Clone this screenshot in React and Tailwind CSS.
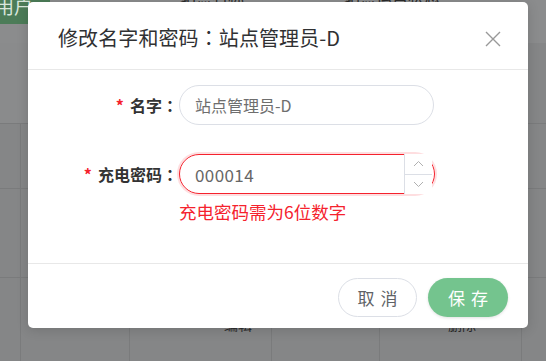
import { useState } from "react";

const font = { fontFamily: '"Noto Sans CJK SC", "Noto Sans", sans-serif' };

function Colon() {
  return <span className="font-['Noto_Sans_CJK_TC']">：</span>;
}

function CloseIcon() {
  return (
    <svg width="16" height="16" viewBox="0 0 16 16" fill="none" stroke="#999" strokeWidth="1.4">
      <path d="M1 1 L15 15 M15 1 L1 15" />
    </svg>
  );
}

function Chevron({ up }) {
  return (
    <svg width="11" height="7" viewBox="0 0 11 7" fill="none" stroke="#b0b0b0" strokeWidth="1">
      {up ? <path d="M1 6 L5.5 1.5 L10 6" /> : <path d="M1 1 L5.5 5.5 L10 1" />}
    </svg>
  );
}

function Background() {
  const cols = "grid grid-cols-[21px_109px_142px_108px_142px_24px]";
  return (
    <div className="absolute inset-0 flex flex-col bg-[#858687]">
      <div className="flex h-[24px] bg-[#8b8c8d]">
        <div className="w-[55px] bg-[#4c7c58] text-[#d9e6dc] text-[19px] leading-[19px] -mt-[4px] -ml-[5px] overflow-hidden">
          用户
        </div>
        <div className="flex-1 flex gap-[100px] pl-[130px] text-[16px] leading-[16px] -mt-[12px] text-[#2a2a2a]">
          <span>站点名称</span>
          <span>站点运营状态</span>
        </div>
      </div>
      <div className="h-[19px] bg-[#8b8c8d]" />
      <div className="h-[80px] flex">
        <div className="flex-1 bg-[#8a8b8c]" />
        <div className="w-[18px] bg-[#858687]" />
      </div>
      <div className={`${cols} h-[65px] border-t border-[#7a7b7c]`}>
        <div className="border-r border-[#7a7b7c]" />
      </div>
      <div className={`${cols} h-[89px] border-t border-[#7a7b7c]`}>
        <div className="border-r border-[#7a7b7c]" />
      </div>
      <div className={`${cols} flex-1 border-t border-[#7a7b7c] text-[14px] text-[#2a2a2a]`}>
        <div className="border-r border-[#7a7b7c]" />
        <div className="border-r border-[#7a7b7c]" />
        <div className="border-r border-[#7a7b7c] flex pl-[94px] pt-[36px]">编辑</div>
        <div className="border-r border-[#7a7b7c]" />
        <div className="border-r border-[#7a7b7c] flex pl-[68px] pt-[36px]">删除</div>
        <div />
      </div>
    </div>
  );
}

export default function App() {
  const [name, setName] = useState("站点管理员-D");
  const [pwd, setPwd] = useState("000014");

  return (
    <div className="relative w-[546px] h-[361px] overflow-hidden" style={font}>
      <Background />

      <div className="absolute left-[28px] top-[2px] w-[500px] h-[326px] bg-white rounded-[5px] shadow-[0_2px_12px_rgba(0,0,0,0.15)] flex flex-col">
        <div className="h-[68px] flex items-center justify-between pl-[30px] pr-[27px] pt-[4px] border-b border-[#e8e8e8]">
          <span className="text-[20px] text-[#303133] tracking-[0.1px]">
            修改名字和密码<Colon />站点管理员-D
          </span>
          <button className="w-[16px] h-[16px] flex items-center justify-center mt-[3px]">
            <CloseIcon />
          </button>
        </div>

        <div className="h-[193px] flex flex-col pt-[15px]">
          <div className="flex items-center">
            <label className="w-[151px] text-right text-[16px] font-bold text-[#333] pr-[1px]">
              <span className="text-[#f5222d] mr-[6px]">*</span>名字<Colon />
            </label>
            <input
              value={name}
              onChange={(e) => setName(e.target.value)}
              className="w-[255px] h-[40px] rounded-full border border-[#dcdfe6] px-[15px] text-[16px] text-[#6e6e6e] outline-none"
            />
          </div>

          <div className="flex items-start mt-[29px]">
            <label className="w-[151px] h-[40px] flex items-center justify-end text-[16px] font-bold text-[#333] pr-[1px]">
              <span className="text-[#f5222d] mr-[6px]">*</span>充电密码<Colon />
            </label>
            <div className="flex flex-col">
              <div className="relative w-[256px] h-[40px] rounded-full border border-[#f5222d] shadow-[0_0_0_2px_rgba(245,34,45,0.15)]">
                <input
                  value={pwd}
                  onChange={(e) => setPwd(e.target.value)}
                  className="w-full h-full rounded-full px-[15px] text-[17px] tracking-[0.4px] text-[#666] outline-none bg-transparent"
                />
                <div className="absolute right-[2px] -top-[1px] -bottom-[1px] w-[28px] bg-white border-l border-[#dcdfe6] flex flex-col">
                  <div className="flex-1 flex items-center justify-center border-b border-[#dcdfe6]">
                    <Chevron up />
                  </div>
                  <div className="flex-1 flex items-center justify-center">
                    <Chevron />
                  </div>
                </div>
              </div>
              <div className="mt-[8px] text-[17.5px] leading-[20px] text-[#f5222d]">充电密码需为6位数字</div>
            </div>
          </div>
        </div>

        <div className="flex-1 flex justify-end items-start gap-[11px] pr-[20px] pt-[14px] border-t border-[#e8e8e8]">
          <button className="w-[79px] h-[39px] rounded-full border border-[#dcdfe6] bg-white text-[17px] text-[#606266] tracking-[6px] pl-[6px]">
            取消
          </button>
          <button className="w-[80px] h-[39px] rounded-full bg-[#74c48e] text-[17px] text-white tracking-[6px] pl-[6px] shadow-[0_1px_3px_rgba(0,0,0,0.12)]">
            保存
          </button>
        </div>
      </div>
    </div>
  );
}
